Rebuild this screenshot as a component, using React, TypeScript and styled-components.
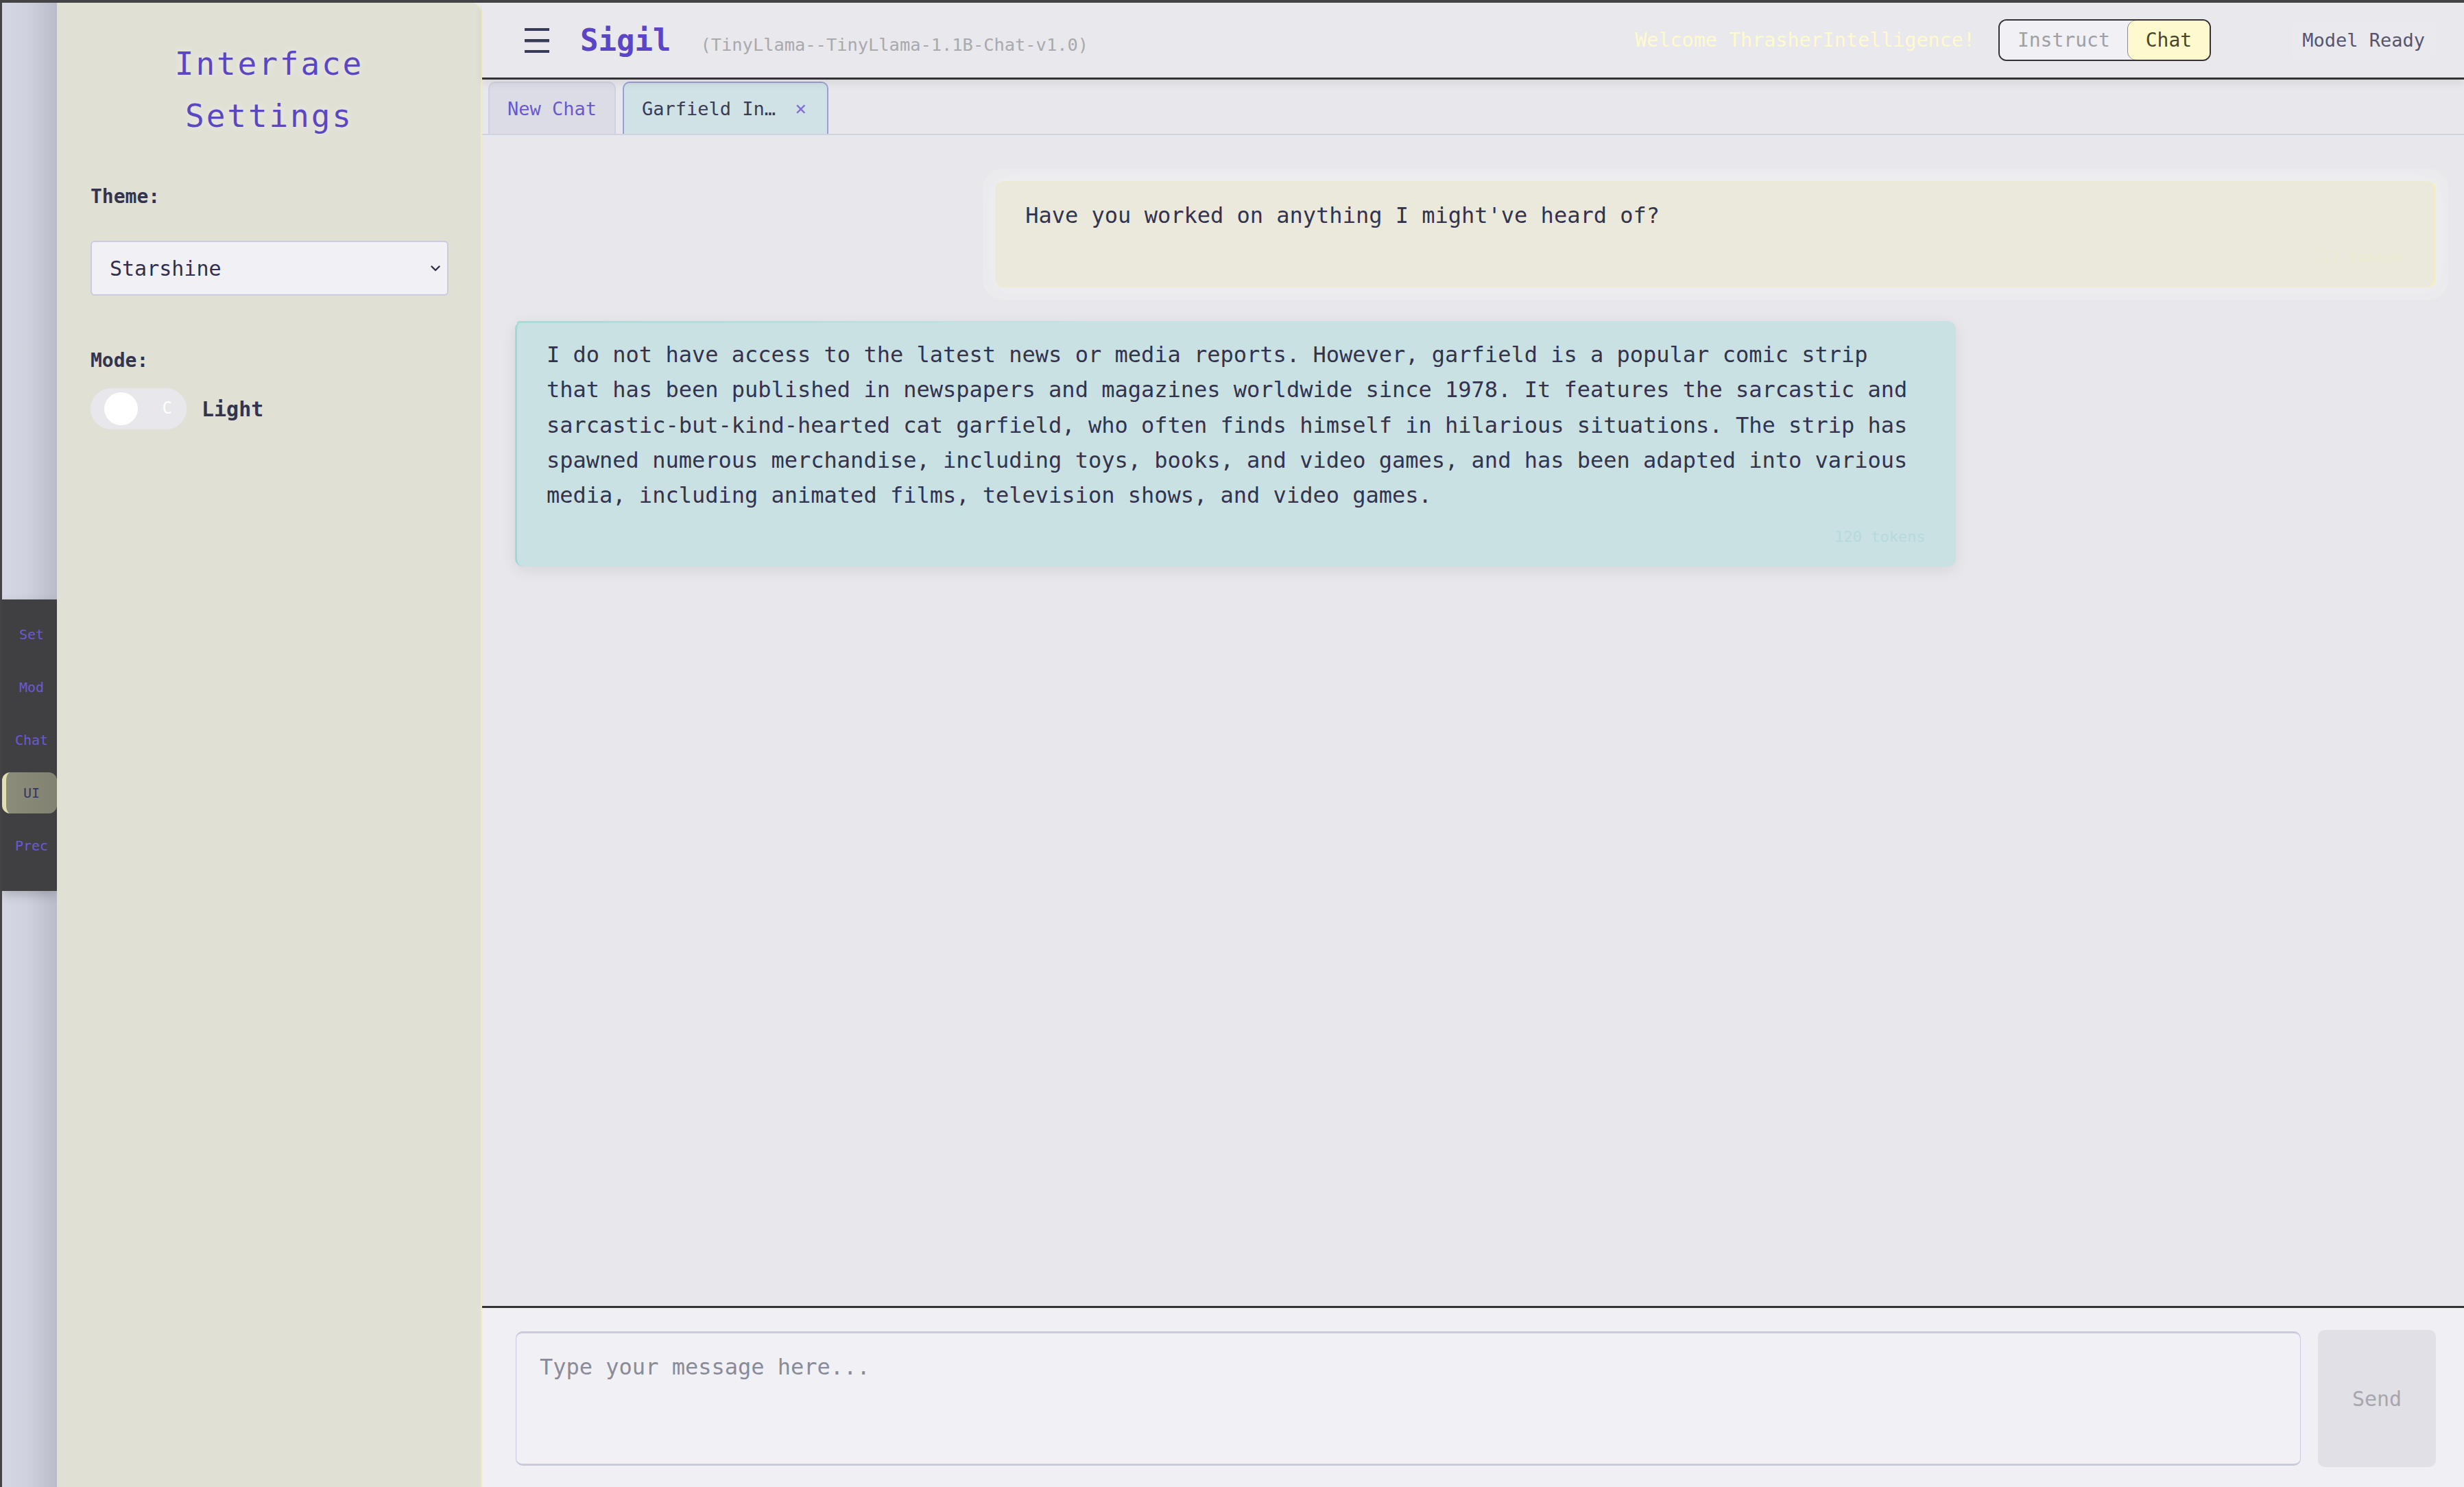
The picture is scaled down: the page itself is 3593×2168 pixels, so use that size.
import React from "react";
import styled, { createGlobalStyle, css } from "styled-components";

const GlobalStyle = createGlobalStyle`
  html, body { margin: 0; padding: 0; }
  body {
    font-family: "DejaVu Sans Mono", "Liberation Mono", monospace;
    background: #e8e8ed;
  }
  * { box-sizing: border-box; }
`;

const Frame = styled.div`
  display: flex;
  height: 100vh;
  border-top: 4px solid #444446;
  border-left: 3px solid #444446;
  background: #e8e8ed;
  overflow: hidden;
`;

const Rail = styled.aside`
  width: 80px;
  flex-shrink: 0;
  display: flex;
  align-items: center;
  background: linear-gradient(to right, #d5d8e4 0%, #cfd1dd 45%, #b9bbc8 100%);
`;

const RailNav = styled.nav`
  width: 80px;
  background: #404042;
  display: flex;
  flex-direction: column;
  gap: 17px;
  padding: 21px 0 36px;
  box-shadow: 0 6px 14px rgba(0, 0, 0, 0.18);
`;

const RailItem = styled.div<{ $active?: boolean }>`
  height: 60px;
  display: flex;
  align-items: center;
  justify-content: center;
  padding-left: 6px;
  font-size: 20px;
  color: #6a5ad8;
  border-radius: 12px;
  ${(p) =>
    p.$active &&
    css`
      color: #363664;
      border-left: 6px solid #e2ddb2;
      background: linear-gradient(to right, #8c8c7a, #828272);
      padding-left: 0;
    `}
`;

const SettingsPanel = styled.section`
  width: 620px;
  flex-shrink: 0;
  background: #e0e0d5;
  border-right: 2px solid #efebc2;
  border-top-right-radius: 16px;
  padding: 51px 48px 0 49px;
  display: flex;
  flex-direction: column;
`;

const PanelTitle = styled.h1`
  margin: 0;
  font-size: 46px;
  font-weight: normal;
  letter-spacing: 2.9px;
  line-height: 76px;
  text-align: center;
  color: #5b47c4;
  text-shadow: 0 0 12px rgba(255, 255, 255, 0.55);
`;

const FieldLabel = styled.div<{ $gapTop: number; $gapBottom: number }>`
  margin-top: ${(p) => p.$gapTop}px;
  margin-bottom: ${(p) => p.$gapBottom}px;
  font-size: 28px;
  font-weight: 600;
  line-height: 42px;
  color: #34344e;
`;

const SelectWrap = styled.div`
  position: relative;
  width: 522px;
`;

const ThemeSelect = styled.select`
  appearance: none;
  width: 100%;
  height: 80px;
  padding: 0 60px 0 26px;
  font-family: inherit;
  font-size: 30px;
  color: #30304c;
  background: #f0f0f5;
  border: 2px solid #c9cbdf;
  border-radius: 6px;
`;

const Chevron = styled.svg`
  position: absolute;
  right: 12px;
  top: 36px;
  pointer-events: none;
`;

const ModeRow = styled.div`
  display: flex;
  align-items: center;
  gap: 22px;
`;

const Switch = styled.div`
  position: relative;
  width: 140px;
  height: 60px;
  border-radius: 30px;
  background: #e8e8ec;
`;

const Knob = styled.span`
  position: absolute;
  left: 20px;
  top: 6px;
  width: 49px;
  height: 48px;
  border-radius: 50%;
  background: #ffffff;
`;

const SwitchGlyph = styled.span`
  position: absolute;
  right: 21px;
  top: 14px;
  font-size: 24px;
  line-height: 30px;
  color: #ffffff;
`;

const ModeText = styled.span`
  font-size: 30px;
  font-weight: 600;
  color: #34344e;
`;

const Main = styled.main`
  flex: 1;
  min-width: 0;
  display: flex;
  flex-direction: column;
  background: #e8e8ec;
`;

const Header = styled.header`
  position: relative;
  z-index: 2;
  height: 112px;
  flex-shrink: 0;
  display: flex;
  align-items: center;
  padding: 0 41px 0 62px;
  background: #e8e8ed;
  border-bottom: 3px solid #333335;
  box-shadow: 0 5px 12px rgba(0, 0, 0, 0.08);
`;

const Brand = styled.div`
  display: flex;
  align-items: baseline;
`;

const MenuIcon = styled.svg`
  margin-right: 45px;
  align-self: center;
`;

const Logo = styled.span`
  font-size: 44px;
  font-weight: bold;
  color: #5a45c6;
  margin-right: 43px;
`;

const ModelName = styled.span`
  font-size: 25.4px;
  color: #a9a9ae;
`;

const HeaderRight = styled.div`
  margin-left: auto;
  display: flex;
  align-items: center;
`;

const Welcome = styled.span`
  font-size: 28.4px;
  color: #fffacd;
  margin-right: 34px;
`;

const ModeToggle = styled.div`
  display: flex;
  height: 61px;
  border: 2px solid #333335;
  border-radius: 12px;
  overflow: hidden;
  background: #f0f0f5;
  margin-right: 117px;
`;

const ModeButton = styled.button<{ $active?: boolean }>`
  border: none;
  padding: 0 26px;
  font-family: inherit;
  font-size: 28px;
  background: ${(p) => (p.$active ? "#fffacd" : "#f0f0f5")};
  color: ${(p) => (p.$active ? "#47472e" : "#a0a0a4")};
  border-radius: ${(p) => (p.$active ? "12px 0 0 12px" : "0")};
  box-shadow: ${(p) => (p.$active ? "-1px 0 0 #8a8a8a" : "none")};
`;

const Status = styled.div`
  height: 55px;
  display: flex;
  align-items: center;
  padding: 0 16px;
  border-radius: 8px;
  background: #e9e9ee;
  font-size: 27px;
  color: #555572;
`;

const TabBar = styled.div`
  height: 81px;
  flex-shrink: 0;
  display: flex;
  align-items: flex-end;
  gap: 10px;
  padding-left: 9px;
  border-bottom: 2px solid #cfd3e1;
`;

const Tab = styled.div<{ $active?: boolean }>`
  height: 76px;
  display: flex;
  align-items: center;
  gap: 28px;
  padding: 0 ${(p) => (p.$active ? 30 : 26)}px 0 26px;
  border: 2px solid ${(p) => (p.$active ? "#9d9dd6" : "#cfd0e1")};
  border-bottom: none;
  border-radius: 10px 10px 0 0;
  background: ${(p) => (p.$active ? "#d0e2e5" : "#dcdce6")};
  font-size: 27px;
  color: ${(p) => (p.$active ? "#3b3b56" : "#6a58d2")};
`;

const TabClose = styled.span`
  color: #7f6fd6;
  font-size: 28px;
`;

const ChatArea = styled.div`
  flex: 1;
  min-height: 0;
  display: flex;
  flex-direction: column;
  gap: 49px;
  padding: 67px 41px 0 48px;
`;

const Bubble = styled.div<{ $role: "user" | "assistant" }>`
  position: relative;
  width: 75%;
  padding: 24px 44px 27px 43px;
  border-radius: 12px;
  ${(p) =>
    p.$role === "user"
      ? css`
          align-self: flex-end;
          background: #eae9db;
          border: 1px solid #efedcd;
          border-right: 3px solid #f4efb8;
          box-shadow: 0 0 0 18px rgba(240, 240, 244, 0.35), 0 0 30px rgba(255, 255, 255, 0.4);
        `
      : css`
          align-self: flex-start;
          background: #c9e1e3;
          border-left: 3px solid #a2d8d6;
          box-shadow: 0 6px 22px rgba(0, 0, 0, 0.08);
          &::before {
            content: "";
            position: absolute;
            left: 0;
            top: 0;
            width: 40%;
            height: 3px;
            border-top-left-radius: 12px;
            background: linear-gradient(to right, #a8dcd8, rgba(168, 220, 216, 0));
          }
        `}
`;

const MessageText = styled.p`
  margin: 0;
  font-size: 32px;
  line-height: 1.6;
  color: #33334e;
  white-space: pre-wrap;
`;

const TokenMeta = styled.div<{ $role: "user" | "assistant" }>`
  margin-top: 18px;
  text-align: right;
  font-size: 22px;
  line-height: 33px;
  color: ${(p) => (p.$role === "user" ? "#ecebd0" : "#b6dadb")};
`;

const Composer = styled.div`
  flex-shrink: 0;
  display: flex;
  align-items: center;
  gap: 25px;
  padding: 32px 41px 29px 49px;
  background: #f0f0f4;
  border-top: 3px solid #333335;
`;

const MessageInput = styled.textarea`
  flex: 1;
  height: 196px;
  resize: none;
  padding: 24px 34px;
  font-family: inherit;
  font-size: 32px;
  line-height: 1.6;
  color: #33334e;
  background: #f0f0f5;
  border: 1px solid #c9cbdd;
  border-top-width: 3px;
  border-bottom-width: 3px;
  border-radius: 10px;
  outline: none;
  &::placeholder {
    color: #8a8a98;
  }
`;

const SendButton = styled.button`
  width: 172px;
  height: 200px;
  border: none;
  border-radius: 10px;
  background: #e0e0e6;
  color: #a6a6b0;
  font-family: inherit;
  font-size: 30px;
`;

const railItems = ["Set", "Mod", "Chat", "UI", "Prec"];

const messages: { role: "user" | "assistant"; text: string; tokens: string }[] = [
  { role: "user", text: "Have you worked on anything I might've heard of?", tokens: "12 tokens" },
  {
    role: "assistant",
    text:
      "I do not have access to the latest news or media reports. However, garfield is a popular comic strip that has been published in newspapers and magazines worldwide since 1978. It features the sarcastic and sarcastic-but-kind-hearted cat garfield, who often finds himself in hilarious situations. The strip has spawned numerous merchandise, including toys, books, and video games, and has been adapted into various media, including animated films, television shows, and video games.",
    tokens: "120 tokens",
  },
];

export default function App() {
  return (
    <>
      <GlobalStyle />
      <Frame>
        <Rail>
          <RailNav>
            {railItems.map((item) => (
              <RailItem key={item} $active={item === "UI"}>
                {item}
              </RailItem>
            ))}
          </RailNav>
        </Rail>

        <SettingsPanel>
          <PanelTitle>
            Interface
            <br />
            Settings
          </PanelTitle>
          <FieldLabel $gapTop={59} $gapBottom={43}>Theme:</FieldLabel>
          <SelectWrap>
            <ThemeSelect defaultValue="Starshine">
              <option>Starshine</option>
            </ThemeSelect>
            <Chevron width="14" height="9" viewBox="0 0 14 9">
              <path d="M1.5 1.5 L7 7 L12.5 1.5" fill="none" stroke="#2f2f45" strokeWidth="2.4" strokeLinecap="round" strokeLinejoin="round" />
            </Chevron>
          </SelectWrap>
          <FieldLabel $gapTop={74} $gapBottom={19}>Mode:</FieldLabel>
          <ModeRow>
            <Switch>
              <Knob />
              <SwitchGlyph>C</SwitchGlyph>
            </Switch>
            <ModeText>Light</ModeText>
          </ModeRow>
        </SettingsPanel>

        <Main>
          <Header>
            <Brand>
              <MenuIcon width="36" height="36" viewBox="0 0 36 36">
                <rect x="0" y="0" width="36" height="4" fill="#393958" />
                <rect x="0" y="16" width="36" height="4.5" fill="#393958" />
                <rect x="0" y="32" width="36" height="4" fill="#393958" />
              </MenuIcon>
              <Logo>Sigil</Logo>
              <ModelName>(TinyLlama--TinyLlama-1.1B-Chat-v1.0)</ModelName>
            </Brand>
            <HeaderRight>
              <Welcome>Welcome ThrasherIntelligence!</Welcome>
              <ModeToggle>
                <ModeButton>Instruct</ModeButton>
                <ModeButton $active>Chat</ModeButton>
              </ModeToggle>
              <Status>Model Ready</Status>
            </HeaderRight>
          </Header>

          <TabBar>
            <Tab>New Chat</Tab>
            <Tab $active>
              <span>Garfield In…</span>
              <TabClose>×</TabClose>
            </Tab>
          </TabBar>

          <ChatArea>
            {messages.map((m, i) => (
              <Bubble key={i} $role={m.role}>
                <MessageText>{m.text}</MessageText>
                <TokenMeta $role={m.role}>{m.tokens}</TokenMeta>
              </Bubble>
            ))}
          </ChatArea>

          <Composer>
            <MessageInput placeholder="Type your message here..." />
            <SendButton>Send</SendButton>
          </Composer>
        </Main>
      </Frame>
    </>
  );
}
